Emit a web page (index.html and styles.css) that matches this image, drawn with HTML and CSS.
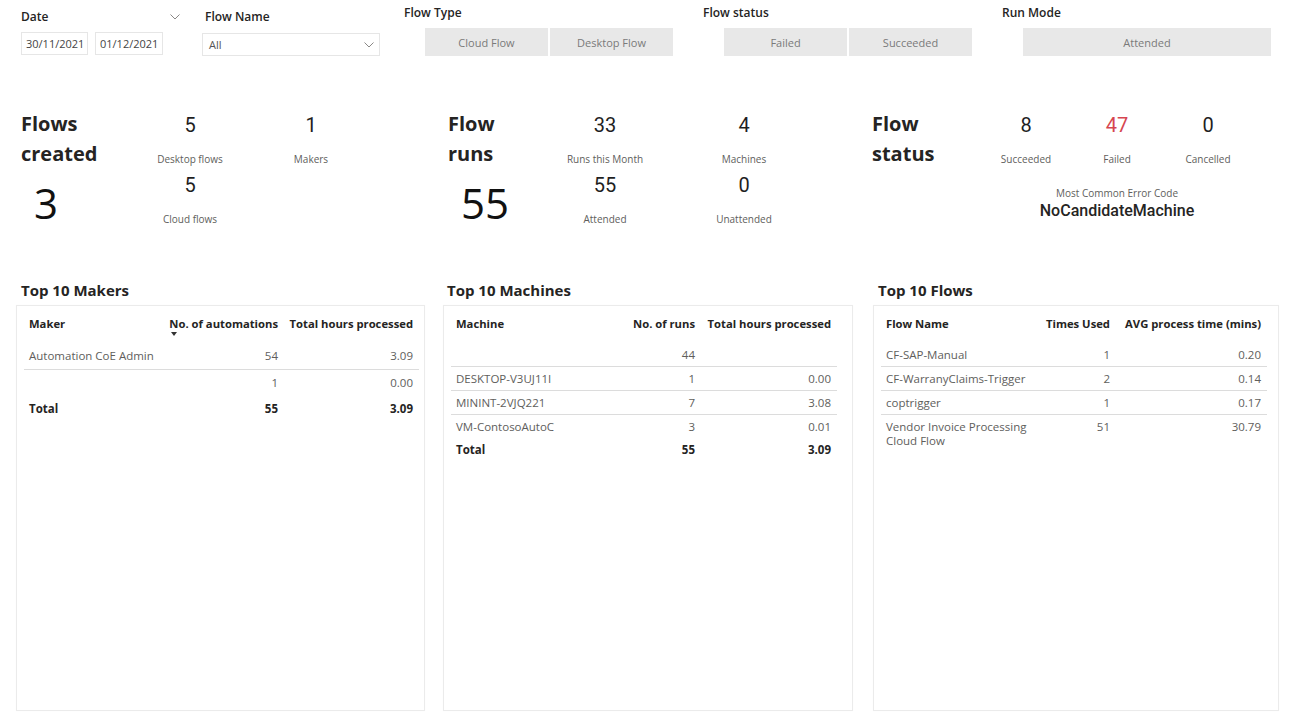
FILE: index.html
```html
<!DOCTYPE html>
<html lang="en">
<head>
<meta charset="utf-8">
<title>Automation CoE Dashboard</title>
<link rel="stylesheet" href="styles.css">
</head>
<body>
<div class="filters">
  <div class="f f-date">
    <div class="f-head">
      <span class="f-label">Date</span>
      <svg class="chev" width="10" height="6" viewBox="0 0 10 6"><polyline points="0.5,0.5 5,5 9.5,0.5" fill="none" stroke="#8a8886" stroke-width="1"/></svg>
    </div>
    <div class="dates">
      <div class="datebox">30/11/2021</div>
      <div class="datebox datebox-2">01/12/2021</div>
    </div>
  </div>
  <div class="f f-name">
    <div class="f-label f-label-pad">Flow Name</div>
    <div class="dropdown">
      <span>All</span>
      <svg class="chev" width="10" height="6" viewBox="0 0 10 6"><polyline points="0.5,0.5 5,5 9.5,0.5" fill="none" stroke="#8a8886" stroke-width="1"/></svg>
    </div>
  </div>
  <div class="f f-btns f-type">
    <div class="f-label">Flow Type</div>
    <div class="btns">
      <div class="btn">Cloud Flow</div>
      <div class="btn">Desktop Flow</div>
    </div>
  </div>
  <div class="f f-btns f-status">
    <div class="f-label">Flow status</div>
    <div class="btns">
      <div class="btn">Failed</div>
      <div class="btn">Succeeded</div>
    </div>
  </div>
  <div class="f f-btns f-run">
    <div class="f-label">Run Mode</div>
    <div class="btns">
      <div class="btn btn-wide">Attended</div>
    </div>
  </div>
</div>

<div class="kpis">
  <div class="kpi kpi-1">
    <div class="kpi-title-block">
      <div class="kpi-title">Flows<br>created</div>
      <div class="big">3</div>
    </div>
    <div class="stat"><div class="stat-num">5</div><div class="stat-label">Desktop flows</div></div>
    <div class="stat"><div class="stat-num">1</div><div class="stat-label">Makers</div></div>
    <div class="stat stat-r2"><div class="stat-num">5</div><div class="stat-label">Cloud flows</div></div>
  </div>
  <div class="kpi kpi-2">
    <div class="kpi-title-block">
      <div class="kpi-title">Flow<br>runs</div>
      <div class="big">55</div>
    </div>
    <div class="stat"><div class="stat-num">33</div><div class="stat-label">Runs this Month</div></div>
    <div class="stat"><div class="stat-num">4</div><div class="stat-label">Machines</div></div>
    <div class="stat stat-r2"><div class="stat-num">55</div><div class="stat-label">Attended</div></div>
    <div class="stat"><div class="stat-num">0</div><div class="stat-label">Unattended</div></div>
  </div>
  <div class="kpi kpi-3">
    <div class="kpi-title-block">
      <div class="kpi-title">Flow<br>status</div>
    </div>
    <div class="stat"><div class="stat-num">8</div><div class="stat-label">Succeeded</div></div>
    <div class="stat"><div class="stat-num stat-red">47</div><div class="stat-label">Failed</div></div>
    <div class="stat"><div class="stat-num">0</div><div class="stat-label">Cancelled</div></div>
    <div class="error">
      <div class="error-label">Most Common Error Code</div>
      <div class="error-code">NoCandidateMachine</div>
    </div>
  </div>
</div>

<div class="tables">
  <div class="tcol tcol-1">
    <div class="tbl-title">Top 10 Makers</div>
    <div class="panel">
      <table class="tbl makers">
        <colgroup><col class="c1"><col class="c2"><col class="c3"></colgroup>
        <thead>
          <tr><th>Maker</th><th class="num"><span class="sorted">No. of automations<span class="sort-arrow"></span></span></th><th class="num">Total hours processed</th></tr>
        </thead>
        <tbody>
          <tr class="sep"><td>Automation CoE Admin</td><td class="num">54</td><td class="num">3.09</td></tr>
          <tr><td></td><td class="num">1</td><td class="num">0.00</td></tr>
          <tr class="total"><td>Total</td><td class="num">55</td><td class="num">3.09</td></tr>
        </tbody>
      </table>
    </div>
  </div>
  <div class="tcol tcol-2">
    <div class="tbl-title">Top 10 Machines</div>
    <div class="panel">
      <table class="tbl machines">
        <colgroup><col class="c1"><col class="c2"><col class="c3"></colgroup>
        <thead>
          <tr><th>Machine</th><th class="num">No. of runs</th><th class="num">Total hours processed</th></tr>
        </thead>
        <tbody>
          <tr class="sep"><td></td><td class="num">44</td><td class="num"></td></tr>
          <tr class="sep"><td>DESKTOP-V3UJ11I</td><td class="num">1</td><td class="num">0.00</td></tr>
          <tr class="sep"><td>MININT-2VJQ221</td><td class="num">7</td><td class="num">3.08</td></tr>
          <tr><td>VM-ContosoAutoC</td><td class="num">3</td><td class="num">0.01</td></tr>
          <tr class="total"><td>Total</td><td class="num">55</td><td class="num">3.09</td></tr>
        </tbody>
      </table>
    </div>
  </div>
  <div class="tcol tcol-3">
    <div class="tbl-title">Top 10 Flows</div>
    <div class="panel">
      <table class="tbl flows">
        <colgroup><col class="c1"><col class="c2"><col class="c3"></colgroup>
        <thead>
          <tr><th>Flow Name</th><th class="num">Times Used</th><th class="num">AVG process time (mins)</th></tr>
        </thead>
        <tbody>
          <tr class="sep"><td>CF-SAP-Manual</td><td class="num">1</td><td class="num">0.20</td></tr>
          <tr class="sep"><td>CF-WarranyClaims-Trigger</td><td class="num">2</td><td class="num">0.14</td></tr>
          <tr class="sep"><td>coptrigger</td><td class="num">1</td><td class="num">0.17</td></tr>
          <tr><td>Vendor Invoice Processing<br>Cloud Flow</td><td class="num">51</td><td class="num">30.79</td></tr>
        </tbody>
      </table>
    </div>
  </div>
</div>
</body>
</html>
```

FILE: styles.css
```css
* { box-sizing: border-box; }

html, body {
  margin: 0;
  padding: 0;
  background: #ffffff;
}

body {
  font-family: "Open Sans", "Noto Sans", sans-serif;
  color: #252423;
  width: 1292px;
  height: 726px;
  overflow: hidden;
}

/* ---------- filters ---------- */
.filters {
  display: flex;
  align-items: flex-start;
  height: 60px;
  padding-left: 21px;
}

.f-label {
  font-size: 12px;
  line-height: 16px;
  font-weight: 600;
  color: #252423;
}

.f-date {
  width: 159px;
  padding-top: 9px;
}

.f-head {
  display: flex;
  justify-content: space-between;
  align-items: center;
  height: 16px;
}

.chev { display: block; }

.dates {
  display: flex;
  gap: 7px;
  margin-top: 7px;
}

.datebox {
  width: 67px;
  height: 23px;
  border: 1px solid #e6e6e6;
  font-size: 11px;
  line-height: 21px;
  padding-left: 4px;
  color: #444;
}

.datebox-2 { width: 68px; }

.f-name {
  margin-left: 22px;
  width: 178px;
  padding-top: 9px;
}

.f-label-pad { padding-left: 3px; }

.dropdown {
  margin-top: 8px;
  height: 23px;
  border: 1px solid #e6e6e6;
  display: flex;
  align-items: center;
  justify-content: space-between;
  padding: 0 5px 0 6px;
  font-size: 11px;
  color: #555;
}

.f-btns {
  width: 269px;
  padding-top: 5px;
}

.f-type { margin-left: 24px; }
.f-status, .f-run { margin-left: 30px; }

.btns {
  display: flex;
  gap: 2px;
  margin-top: 7px;
  padding-left: 21px;
}

.btn {
  width: 123px;
  height: 28px;
  background: #e8e8e8;
  display: flex;
  align-items: center;
  justify-content: center;
  font-size: 11px;
  color: #7a7a7a;
}

.btn-wide { width: 248px; }

/* ---------- KPIs ---------- */
.kpis {
  display: grid;
  grid-template-columns: 409px 409px 407px;
  column-gap: 19px;
  padding-left: 16px;
  margin-top: 49px;
}

.kpi {
  display: grid;
  align-items: start;
  row-gap: 2px;
}

.kpi-1 { grid-template-columns: 103px 100px 100px; column-gap: 21px; }
.kpi-2 { grid-template-columns: 72px 100px 100px; column-gap: 39px; }
.kpi-3 { grid-template-columns: 108px 90px 90px 90px; column-gap: 1px; }

.kpi-title-block { grid-row: 1 / span 2; }
.kpi-1 .kpi-title-block { padding-left: 5px; }
.kpi-2 .kpi-title-block { padding-left: 4px; }

.kpi-title {
  font-size: 20px;
  line-height: 30px;
  font-weight: 700;
  color: #252423;
  white-space: nowrap;
}

.big {
  font-size: 42px;
  line-height: 48px;
  margin-top: 10px;
  padding-left: 13px;
  color: #111;
  white-space: nowrap;
}

.stat {
  padding-top: 2px;
  text-align: center;
}

.stat-r2 { grid-column: 2; }

.stat-num {
  font-family: Roboto, "DejaVu Sans", sans-serif;
  font-size: 20px;
  line-height: 28px;
  color: #1f1f1f;
}

.stat-red { color: #d64550; }

.stat-label {
  margin-top: 13px;
  font-size: 10px;
  line-height: 14px;
  color: #605e5c;
}

.error {
  grid-column: 2 / span 3;
  text-align: center;
  margin-top: 12px;
}

.error-label {
  font-size: 10px;
  line-height: 14px;
  color: #605e5c;
}

.error-code {
  margin-top: 1px;
  font-family: Roboto, "DejaVu Sans", sans-serif;
  font-weight: 500;
  font-size: 16px;
  line-height: 20px;
  color: #252423;
}

/* ---------- tables ---------- */
.tables {
  display: grid;
  grid-template-columns: 409px 409px 407px;
  column-gap: 19px;
  padding-left: 16px;
  margin-top: 53px;
}

.tbl-title {
  font-size: 15px;
  line-height: 20px;
  font-weight: 700;
  color: #252423;
  margin-bottom: 5px;
}

.tcol-1 .tbl-title { padding-left: 5px; }
.tcol-2 .tbl-title { padding-left: 3px; }
.tcol-3 .tbl-title { padding-left: 6px; }

.tcol-2 .panel { margin-left: -1px; }
.tcol-3 .panel { margin-left: 1px; }

.panel {
  height: 406px;
  border: 1px solid #ebebeb;
  box-shadow: 0 0 1px rgba(0, 0, 0, 0.04);
  padding: 0 5px 0 7px;
}

.tbl {
  border-collapse: collapse;
  table-layout: fixed;
}

.makers { width: 395px; }
.makers .c1 { width: 136px; }
.makers .c2 { width: 124px; }
.makers .c3 { width: 135px; }

.machines { width: 386px; }
.machines .c1 { width: 170px; }
.machines .c2 { width: 80px; }
.machines .c3 { width: 136px; }

.flows { width: 386px; }
.flows .c1 { width: 150px; }
.flows .c2 { width: 85px; }
.flows .c3 { width: 151px; }

.tbl th {
  font-size: 11.25px;
  line-height: 14px;
  font-weight: 700;
  color: #252423;
  text-align: left;
  white-space: nowrap;
  padding: 11px 6px 12px 5px;
}

.tbl td {
  font-size: 11.5px;
  line-height: 14px;
  color: #605e5c;
  padding: 6px 6px 6px 5px;
  vertical-align: top;
}

.machines td, .flows td {
  padding-top: 4.5px;
  padding-bottom: 4.5px;
}

.flows td { white-space: nowrap; }

.tbl .num { text-align: right; }

.tbl tr.sep td { border-bottom: 1px solid #dcdcdc; }

.tbl tr.total td {
  font-weight: 700;
  color: #252423;
}

.sorted {
  position: relative;
  display: inline-block;
}

.sort-arrow {
  position: absolute;
  left: 2px;
  top: 15px;
  width: 0;
  height: 0;
  border-left: 3px solid transparent;
  border-right: 3px solid transparent;
  border-top: 4px solid #333;
}
```
